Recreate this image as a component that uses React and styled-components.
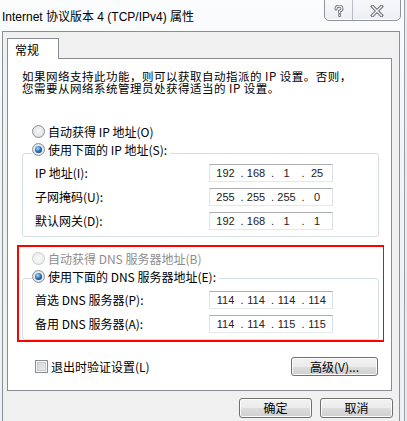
import React from "react";
import styled, { createGlobalStyle } from "styled-components";

const GlobalStyle = createGlobalStyle`
  html, body {
    margin: 0;
    padding: 0;
    background: #e9ecef;
  }
  * {
    box-sizing: border-box;
  }
`;

const CJK = `"Noto Sans CJK SC", "Noto Sans", sans-serif`;

const IpField = ({ value }) => (
  <Field>
    {value.split(".").map((n, i) => (
      <Octet key={i}>
        <Dot>{i ? "." : ""}</Dot>
        <Num>{n}</Num>
      </Octet>
    ))}
  </Field>
);

const HelpIcon = () => (
  <svg width="12" height="12" viewBox="0 0 12 12">
    <path
      d="M3 4 Q3 1.2 6 1.2 Q9 1.2 9 3.8 Q9 5.4 6.6 6.2 L6.6 7.6 M6.6 10.2 L6.6 10.4"
      fill="none"
      stroke="#6b6f75"
      strokeWidth="3"
      strokeLinecap="round"
    />
    <path
      d="M3 4 Q3 1.2 6 1.2 Q9 1.2 9 3.8 Q9 5.4 6.6 6.2 L6.6 7.6 M6.6 10.2 L6.6 10.4"
      fill="none"
      stroke="#f4f6f8"
      strokeWidth="1.2"
      strokeLinecap="round"
    />
  </svg>
);

const CloseIcon = () => (
  <svg width="14" height="12" viewBox="0 0 14 12">
    <path d="M2.5 1.5 L11.5 10.5 M11.5 1.5 L2.5 10.5" stroke="#6b6f75" strokeWidth="3.4" strokeLinecap="square" />
    <path d="M2.5 1.5 L11.5 10.5 M11.5 1.5 L2.5 10.5" stroke="#f4f6f8" strokeWidth="1.4" strokeLinecap="square" />
  </svg>
);

const App = () => (
  <>
    <GlobalStyle />
    <Window>
      <TitleBar>
        <Title>Internet 协议版本 4 (TCP/IPv4) 属性</Title>
        <CaptionButtons>
          <CaptionButton w={28}>
            <HelpIcon />
          </CaptionButton>
          <CaptionButton w={47} last>
            <CloseIcon />
          </CaptionButton>
        </CaptionButtons>
      </TitleBar>

      <Client>
        <Tabs>
          <Tab>常规</Tab>
        </Tabs>
        <Panel>
          <Description>
            <Line>如果网络支持此功能，则可以获取自动指派的 IP 设置。否则，</Line>
            <Line>您需要从网络系统管理员处获得适当的 IP 设置。</Line>
          </Description>

          <RadioRow gap={29}>
            <Radio />
            自动获得 IP 地址(O)
          </RadioRow>

          <GroupBox top={14}>
            <Legend lift={13}>
              <Radio checked />
              使用下面的 IP 地址(S):
            </Legend>
            <FieldGrid>
              <Label>IP 地址(I):</Label>
              <IpField value="192.168.1.25" />
              <Label>子网掩码(U):</Label>
              <IpField value="255.255.255.0" />
              <Label>默认网关(D):</Label>
              <IpField value="192.168.1.1" />
            </FieldGrid>
          </GroupBox>

          <Highlight>
            <RadioRow disabled>
              <Radio disabled />
              自动获得 DNS 服务器地址(B)
            </RadioRow>
            <GroupBox top={12}>
              <Legend lift={11}>
                <Radio checked />
                使用下面的 DNS 服务器地址(E):
              </Legend>
              <FieldGrid>
                <Label>首选 DNS 服务器(P):</Label>
                <IpField value="114.114.114.114" />
                <Label>备用 DNS 服务器(A):</Label>
                <IpField value="114.114.115.115" />
              </FieldGrid>
            </GroupBox>
          </Highlight>

          <FooterRow>
            <CheckLabel>
              <CheckBox />
              退出时验证设置(L)
            </CheckLabel>
            <Button w={87} h={19}>
              高级(V)...
            </Button>
          </FooterRow>
        </Panel>

        <DialogButtons>
          <Button w={73} h={20}>
            确定
          </Button>
          <Button w={73} h={20}>
            取消
          </Button>
        </DialogButtons>
      </Client>
    </Window>
  </>
);

export default App;

const Window = styled.div`
  width: 405px;
  height: 421px;
  display: flex;
  flex-direction: column;
  background: linear-gradient(180deg, #fbfcfd 0%, #f2f4f7 40%, #eef1f4 100%);
  border-right: 1px solid #9a9ea4;
  overflow: hidden;
`;

const TitleBar = styled.div`
  height: 31px;
  display: flex;
  justify-content: space-between;
  align-items: flex-start;
  padding-left: 2px;
  padding-right: 3px;
`;

const Title = styled.div`
  font-family: "Liberation Sans", "Noto Sans CJK SC", sans-serif;
  font-size: 12px;
  line-height: 16px;
  margin-top: 9px;
  color: #000;
  white-space: nowrap;
`;

const CaptionButtons = styled.div`
  display: flex;
  height: 22px;
  margin-top: -1px;
  border: 1px solid #8e949b;
  border-radius: 0 0 5px 5px;
  overflow: hidden;
  background: linear-gradient(180deg, #f7f8fa 0%, #eceff3 100%);
  box-shadow: inset 0 -1px 0 #ffffff;
`;

const CaptionButton = styled.div`
  width: ${(p) => p.w}px;
  display: flex;
  align-items: center;
  justify-content: center;
  padding-top: 2px;
  border-right: ${(p) => (p.last ? "none" : "1px solid #b9bec4")};
`;

const Client = styled.div`
  flex: 1;
  margin-left: 2px;
  width: 398px;
  background: #f0f0f0;
  border: 1px solid #8c9095;
  border-bottom: none;
  display: flex;
  flex-direction: column;
  font-family: ${CJK};
  font-size: 12px;
  color: #000;
`;

const Tabs = styled.div`
  display: flex;
  padding: 6px 0 0 4px;
`;

const Tab = styled.div`
  position: relative;
  z-index: 1;
  width: 52px;
  height: 21px;
  margin-bottom: -1px;
  padding-left: 7px;
  line-height: 21px;
  background: #ffffff;
  border: 1px solid #898c95;
  border-bottom: none;
`;

const Panel = styled.div`
  margin-left: 4px;
  width: 385px;
  height: 333px;
  background: #ffffff;
  border: 1px solid #898c95;
  padding: 11px 12px 0 14px;
  display: flex;
  flex-direction: column;
`;

const Description = styled.div`
  display: flex;
  flex-direction: column;
`;

const Line = styled.div`
  height: 12px;
  font-size: 11.5px;
  line-height: 12px;
  white-space: nowrap;
  letter-spacing: 0.5px;
`;

const RadioRow = styled.div`
  display: flex;
  align-items: center;
  height: 16px;
  margin-top: ${(p) => p.gap || 0}px;
  padding-left: 10px;
  gap: 3px;
  color: ${(p) => (p.disabled ? "#8d8d8d" : "#000")};
  white-space: nowrap;
`;

const Radio = styled.span`
  width: 13px;
  height: 13px;
  border-radius: 50%;
  flex-shrink: 0;
  border: 1px solid ${(p) => (p.disabled ? "#c9cbcd" : "#8b8e92")};
  background: ${(p) =>
    p.disabled
      ? "radial-gradient(circle at 50% 50%, #f7f7f7 0%, #e9eaeb 100%)"
      : "radial-gradient(circle at 50% 45%, #f6f6f6 0%, #e1e3e6 70%, #cfd2d6 100%)"};
  display: flex;
  align-items: center;
  justify-content: center;

  &::after {
    content: "";
    display: ${(p) => (p.checked ? "block" : "none")};
    width: 7px;
    height: 7px;
    border-radius: 50%;
    background: radial-gradient(circle at 40% 35%, #b5e2ff 0%, #3f8fd6 35%, #123f78 75%, #0b2649 100%);
  }
`;

const GroupBox = styled.div`
  margin-top: ${(p) => p.top}px;
  border: 1px solid #d5dfe5;
  border-radius: 3px;
  padding: 0 0 6px 12px;
`;

const Legend = styled(RadioRow)`
  margin-top: -${(p) => p.lift}px;
  margin-left: -3px;
  padding-left: 0;
  padding-right: 3px;
  width: fit-content;
  background: #ffffff;
`;

const FieldGrid = styled.div`
  display: grid;
  grid-template-columns: 174px 124px;
  grid-auto-rows: 18px;
  row-gap: 6px;
  margin-top: 7px;
  align-items: center;
`;

const Label = styled.div`
  white-space: nowrap;
  line-height: 18px;
`;

const Field = styled.div`
  display: flex;
  width: 124px;
  height: 18px;
  border: 1px solid;
  border-color: #abadb3 #dbdfe6 #e3e9ef #e2e3ea;
  background: #ffffff;
  font-family: "Liberation Sans", Arial, sans-serif;
  font-size: 11px;
  line-height: 16px;
  color: #222;
`;

const Octet = styled.div`
  display: flex;
  width: 31px;
`;

const Dot = styled.span`
  width: 4px;
`;

const Num = styled.span`
  width: 23px;
  text-align: center;
`;

const Highlight = styled.div`
  margin: 8px -5px 0 -5px;
  border: 2px solid #ff0000;
  border-right-width: 1px;
  padding: 3px 4px 0 3px;
`;

const FooterRow = styled.div`
  display: flex;
  justify-content: space-between;
  align-items: center;
  margin-top: 15px;
  padding-left: 13px;
  padding-right: 1px;
`;

const CheckLabel = styled.div`
  display: flex;
  align-items: center;
  gap: 3px;
  white-space: nowrap;
`;

const CheckBox = styled.span`
  width: 13px;
  height: 13px;
  border: 1px solid #8b8e92;
  background: #ffffff;
  box-shadow: inset 0 0 0 1px #f4f4f4, inset 0 0 0 2px #c9cbce;
  background-image: linear-gradient(135deg, #cfd1d4 0%, #eef0f2 100%);
  background-clip: content-box;
  padding: 2px;
`;

const Button = styled.button`
  width: ${(p) => p.w}px;
  height: ${(p) => p.h}px;
  padding: 0;
  border: 1px solid #707070;
  border-radius: 3px;
  background: linear-gradient(180deg, #f2f2f2 0%, #ebebeb 50%, #dddddd 51%, #cfcfcf 100%);
  box-shadow: inset 0 0 0 1px #fcfcfc;
  font-family: ${CJK};
  font-size: 12px;
  line-height: 16px;
  color: #000;
`;

const DialogButtons = styled.div`
  display: flex;
  justify-content: flex-end;
  gap: 8px;
  margin-top: 7px;
  padding-right: 6px;
`;
